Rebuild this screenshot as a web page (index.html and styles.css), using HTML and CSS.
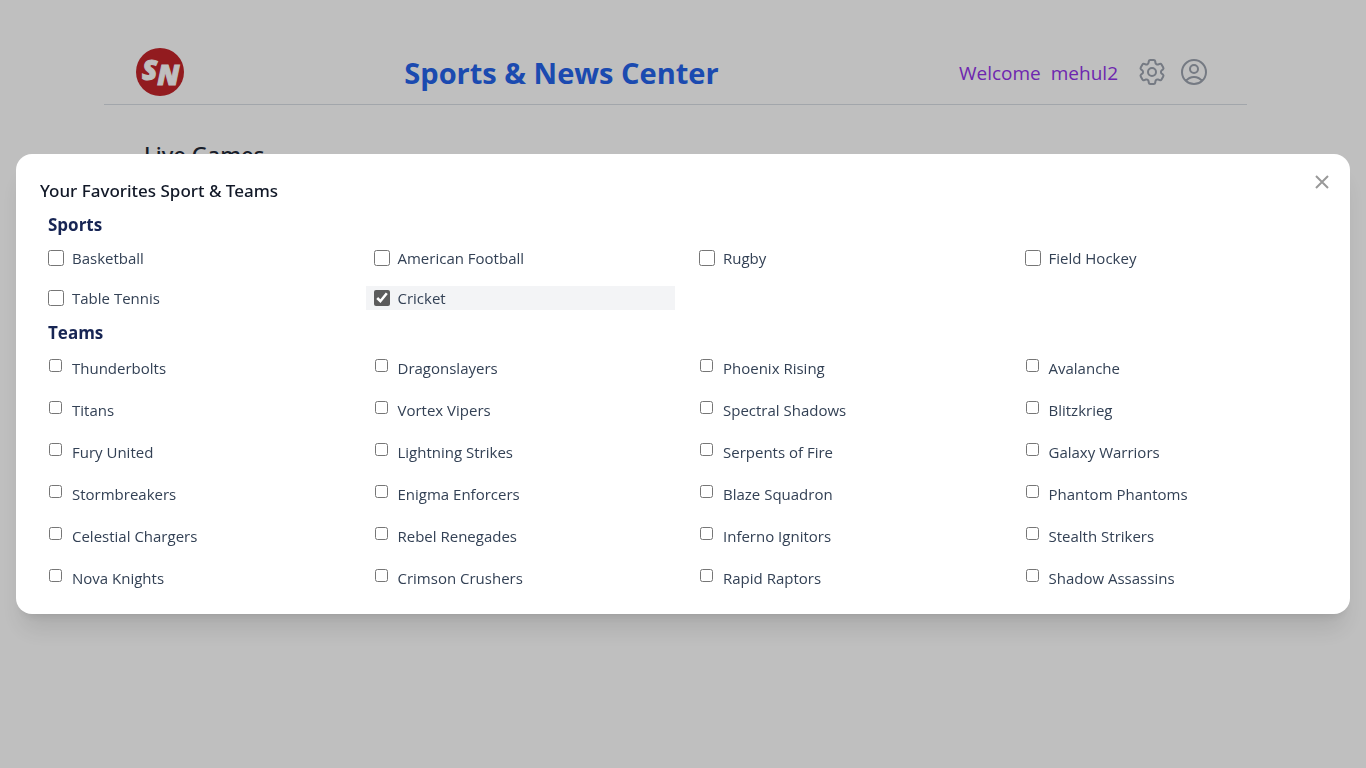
FILE: index.html
```html
<!DOCTYPE html>
<html lang="en">
<head>
<meta charset="utf-8">
<meta name="viewport" content="width=device-width, initial-scale=1">
<title>Sports &amp; News Center</title>
<link rel="stylesheet" href="styles.css">
</head>
<body>
<div class="page">
  <header class="header">
    <svg class="logo" viewBox="0 0 48 48" role="img" aria-label="SN logo">
      <circle cx="24" cy="24" r="24" fill="#c3242a"/>
      <text class="logo-letters" x="6" y="32">S<tspan dy="5">N</tspan></text>
    </svg>
    <h1 class="site-title">Sports &amp; News Center</h1>
    <div class="account">
      <p class="welcome"><span>Welcome</span><span>mehul2</span></p>
      <button class="icon-button" type="button" aria-label="Settings">
        <svg class="icon" viewBox="0 0 24 24"><path d="M9.594 3.94c.09-.542.56-.94 1.11-.94h2.593c.55 0 1.02.398 1.11.94l.213 1.281c.063.374.313.686.645.87.074.04.147.083.22.127.325.196.72.257 1.075.124l1.217-.456a1.125 1.125 0 0 1 1.37.49l1.296 2.247a1.125 1.125 0 0 1-.26 1.431l-1.003.827c-.293.241-.438.613-.43.992a7.723 7.723 0 0 1 0 .255c-.008.378.137.75.43.991l1.004.827c.424.35.534.955.26 1.43l-1.298 2.247a1.125 1.125 0 0 1-1.369.491l-1.217-.456c-.355-.133-.75-.072-1.076.124a6.47 6.47 0 0 1-.22.128c-.331.183-.581.495-.644.869l-.213 1.281c-.09.543-.56.94-1.11.94h-2.594c-.55 0-1.019-.398-1.11-.94l-.213-1.281c-.062-.374-.312-.686-.644-.87a6.52 6.52 0 0 1-.22-.127c-.325-.196-.72-.257-1.076-.124l-1.217.456a1.125 1.125 0 0 1-1.369-.49l-1.297-2.247a1.125 1.125 0 0 1 .26-1.431l1.004-.827c.292-.24.437-.613.43-.991a6.932 6.932 0 0 1 0-.255c.007-.38-.138-.751-.43-.992l-1.004-.827a1.125 1.125 0 0 1-.26-1.43l1.297-2.247a1.125 1.125 0 0 1 1.37-.491l1.216.456c.356.133.751.072 1.076-.124.072-.044.146-.086.22-.128.332-.183.582-.495.644-.869l.214-1.28Z"/><path d="M15 12a3 3 0 1 1-6 0 3 3 0 0 1 6 0Z"/></svg>
      </button>
      <button class="icon-button" type="button" aria-label="Account">
        <svg class="icon" viewBox="0 0 24 24"><path d="M17.982 18.725A7.488 7.488 0 0 0 12 15.75a7.488 7.488 0 0 0-5.982 2.975m11.963 0a9 9 0 1 0-11.963 0m11.963 0A8.966 8.966 0 0 1 12 21a8.966 8.966 0 0 1-5.982-2.275M15 9.75a3 3 0 1 1-6 0 3 3 0 0 1 6 0Z"/></svg>
      </button>
    </div>
  </header>
  <main class="content">
    <h2 class="live-title">Live Games</h2>
  </main>
</div>

<div class="overlay">
  <div class="dialog" role="dialog" aria-modal="true" aria-labelledby="dialog-title">
    <button class="close" type="button" aria-label="Close">
      <svg class="close-icon" viewBox="0 0 24 24"><path d="M6 18 18 6M6 6l12 12"/></svg>
    </button>
    <h2 class="dialog-title" id="dialog-title">Your Favorites Sport &amp; Teams</h2>
    <section class="group">
      <h3 class="group-title">Sports</h3>
      <div class="grid">
        <label class="sport"><input class="box" type="checkbox">Basketball</label>
        <label class="sport"><input class="box" type="checkbox">American Football</label>
        <label class="sport"><input class="box" type="checkbox">Rugby</label>
        <label class="sport"><input class="box" type="checkbox">Field Hockey</label>
        <label class="sport"><input class="box" type="checkbox">Table Tennis</label>
        <label class="sport selected"><input class="box" type="checkbox" checked>Cricket</label>
      </div>
    </section>
    <section class="group">
      <h3 class="group-title">Teams</h3>
      <div class="grid">
        <label class="team"><input class="small-box" type="checkbox">Thunderbolts</label>
        <label class="team"><input class="small-box" type="checkbox">Dragonslayers</label>
        <label class="team"><input class="small-box" type="checkbox">Phoenix Rising</label>
        <label class="team"><input class="small-box" type="checkbox">Avalanche</label>
        <label class="team"><input class="small-box" type="checkbox">Titans</label>
        <label class="team"><input class="small-box" type="checkbox">Vortex Vipers</label>
        <label class="team"><input class="small-box" type="checkbox">Spectral Shadows</label>
        <label class="team"><input class="small-box" type="checkbox">Blitzkrieg</label>
        <label class="team"><input class="small-box" type="checkbox">Fury United</label>
        <label class="team"><input class="small-box" type="checkbox">Lightning Strikes</label>
        <label class="team"><input class="small-box" type="checkbox">Serpents of Fire</label>
        <label class="team"><input class="small-box" type="checkbox">Galaxy Warriors</label>
        <label class="team"><input class="small-box" type="checkbox">Stormbreakers</label>
        <label class="team"><input class="small-box" type="checkbox">Enigma Enforcers</label>
        <label class="team"><input class="small-box" type="checkbox">Blaze Squadron</label>
        <label class="team"><input class="small-box" type="checkbox">Phantom Phantoms</label>
        <label class="team"><input class="small-box" type="checkbox">Celestial Chargers</label>
        <label class="team"><input class="small-box" type="checkbox">Rebel Renegades</label>
        <label class="team"><input class="small-box" type="checkbox">Inferno Ignitors</label>
        <label class="team"><input class="small-box" type="checkbox">Stealth Strikers</label>
        <label class="team"><input class="small-box" type="checkbox">Nova Knights</label>
        <label class="team"><input class="small-box" type="checkbox">Crimson Crushers</label>
        <label class="team"><input class="small-box" type="checkbox">Rapid Raptors</label>
        <label class="team"><input class="small-box" type="checkbox">Shadow Assassins</label>
      </div>
    </section>
  </div>
</div>
</body>
</html>
```
FILE: styles.css
```css
* {
  box-sizing: border-box;
}

body {
  margin: 0;
  background: #fff;
  color: #334155;
  font-family: "Segoe UI", "Open Sans", "Noto Sans", sans-serif;
  font-size: 15px;
  line-height: 24px;
}

h1, h2, h3, p {
  margin: 0;
}

button {
  padding: 0;
  border: 0;
  background: none;
  cursor: pointer;
}

.page {
  padding: 40px 119px 0 104px;
}

.header {
  display: flex;
  align-items: center;
  justify-content: space-between;
  padding: 8px 37px 8px 32px;
  border-bottom: 1px solid #d8dee5;
}

.logo {
  display: block;
  width: 48px;
  height: 48px;
}

.logo-letters {
  fill: #fff;
  stroke: #fff;
  stroke-width: 1;
  font-family: "Open Sans", sans-serif;
  font-size: 28px;
  font-weight: 800;
  font-style: italic;
}

.site-title {
  padding-top: 2px;
  color: #2563eb;
  font-size: 29px;
  font-weight: 700;
  line-height: 36px;
}

.account {
  display: flex;
  align-items: center;
  gap: 10px;
  padding-left: 20px;
}

.welcome {
  display: flex;
  gap: 10px;
  margin-right: 8px;
  padding-top: 2px;
  color: #9333ea;
  font-size: 19px;
  line-height: 28px;
}

.icon,
.close-icon {
  display: block;
  fill: none;
  stroke: #9ca3af;
  stroke-width: 1.5;
  stroke-linecap: round;
  stroke-linejoin: round;
}

.icon {
  width: 32px;
  height: 32px;
}

.content {
  padding: 32px 40px;
}

.live-title {
  color: #1f2937;
  font-family: "Segoe UI", "Noto Sans", sans-serif;
  font-size: 22px;
  font-weight: 500;
  line-height: 34px;
}

.overlay {
  position: fixed;
  inset: 0;
  display: flex;
  align-items: center;
  justify-content: center;
  padding: 16px;
  background: rgba(0, 0, 0, 0.25);
}

.dialog {
  position: relative;
  width: 100%;
  padding: 24px;
  border-radius: 16px;
  background: #fff;
  box-shadow: 0 20px 25px -5px rgba(0, 0, 0, 0.1), 0 8px 10px -6px rgba(0, 0, 0, 0.1);
}

.close {
  position: absolute;
  top: 16px;
  right: 16px;
}

.close-icon {
  width: 24px;
  height: 24px;
  stroke: #999;
  stroke-width: 2;
  stroke-linecap: butt;
}

.dialog-title {
  margin-bottom: 4px;
  color: #111827;
  font-family: "Segoe UI", "Noto Sans", sans-serif;
  font-size: 17px;
  font-weight: 500;
  line-height: 26px;
}

.group-title {
  margin-bottom: 8px;
  padding: 4px 8px 0;
  color: #172554;
  font-size: 17px;
  font-weight: 700;
  line-height: 26px;
}

.group + .group {
  margin-top: 6px;
}

.grid {
  display: grid;
  grid-template-columns: repeat(4, 1fr);
  gap: 16px;
}

.sport,
.team {
  display: flex;
  gap: 8px;
  padding: 0 8px;
}

.sport {
  align-items: center;
}

.team {
  align-items: flex-start;
  padding-top: 2px;
}

.selected {
  background: #f3f4f6;
}

.box {
  width: 16px;
  height: 16px;
  margin: 0;
  accent-color: #5c5c5c;
}

.small-box {
  width: 13px;
  height: 13px;
  margin: 3px 2px 0 1px;
}
```
